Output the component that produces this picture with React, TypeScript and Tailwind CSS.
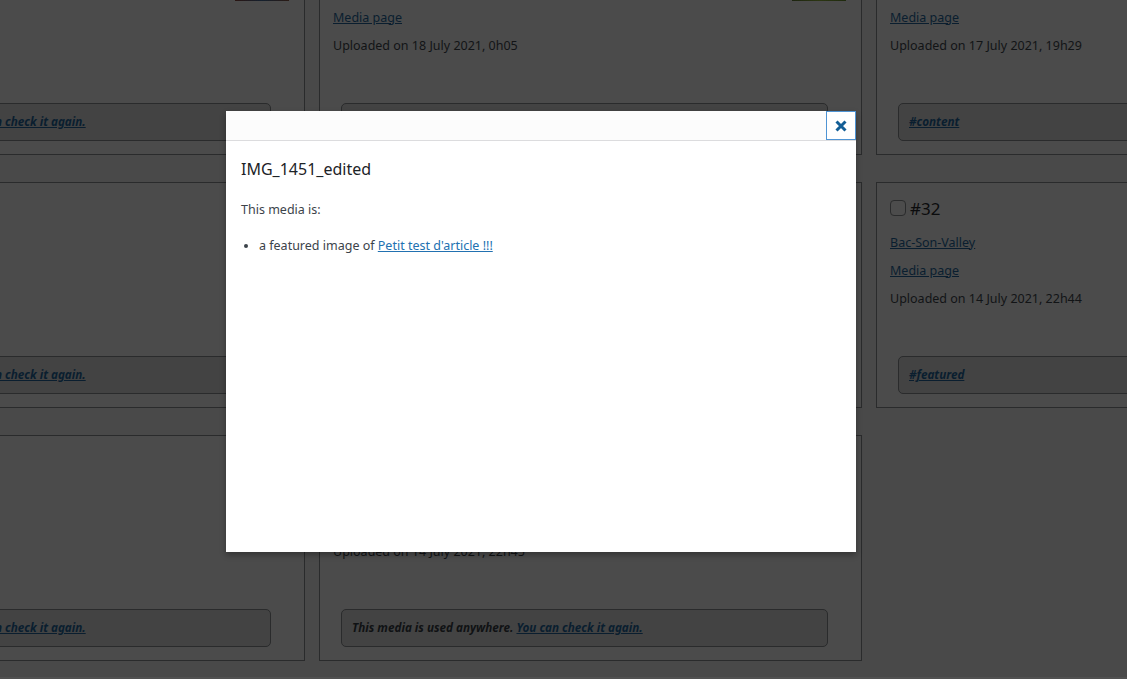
import React from "react";

type CardData = {
  id: string;
  title: string;
  uploaded: string;
  notice: React.ReactNode;
  thumb: string;
} | null;

const usedNotice = (
  <span>
    This media is used anywhere.{" "}
    <span className="underline text-[#0a1e2f]">You can check it again.</span>
  </span>
);

const cards: CardData[] = [
  { id: "#36", title: "IMG_1460", uploaded: "Uploaded on 18 July 2021, 0h10", notice: usedNotice, thumb: "bg-[linear-gradient(90deg,#2a1512,#14202e,#2a1a14)]" },
  { id: "#35", title: "IMG_1459", uploaded: "Uploaded on 18 July 2021, 0h05", notice: usedNotice, thumb: "bg-[linear-gradient(90deg,#1d2410,#2c3612,#1f2a0e)]" },
  { id: "#34", title: "IMG_1451_edited", uploaded: "Uploaded on 17 July 2021, 19h29", notice: <span className="underline text-[#0a1e2f]">#content</span>, thumb: "bg-[#2a2a2a]" },
  { id: "#33", title: "IMG_1450", uploaded: "Uploaded on 15 July 2021, 10h12", notice: usedNotice, thumb: "bg-[#2a2a2a]" },
  { id: "#31", title: "IMG_1449", uploaded: "Uploaded on 14 July 2021, 22h50", notice: usedNotice, thumb: "bg-[#2a2a2a]" },
  { id: "#32", title: "Bac-Son-Valley", uploaded: "Uploaded on 14 July 2021, 22h44", notice: <span className="underline text-[#0a1e2f]">#featured</span>, thumb: "bg-[#2a2a2a]" },
  { id: "#30", title: "IMG_1448", uploaded: "Uploaded on 14 July 2021, 22h46", notice: usedNotice, thumb: "bg-[#2a2a2a]" },
  { id: "#29", title: "IMG_1447", uploaded: "Uploaded on 14 July 2021, 22h45", notice: usedNotice, thumb: "bg-[#2a2a2a]" },
  null,
];

function Card({ c }: { c: NonNullable<CardData> }) {
  return (
    <div className="relative h-[226px] border border-[#2a2b2c] bg-[#4b4b4b] pl-[13px] pt-[14px]">
      <div className={`absolute right-[15px] top-[17px] h-[54px] w-[54px] ${c.thumb}`} />
      <div className="flex h-[22px] items-center gap-[4px]">
        <span className="block h-[16px] w-[16px] rounded-[4px] border border-[#2a2b2c] bg-[#4c4c4c]" />
        <span className="text-[17px] leading-none text-[#0b0c0d]">{c.id}</span>
      </div>
      <div className="mt-[15px] flex h-[18px] items-center">
        <span className="underline text-[#0a1e2f]">{c.title}</span>
      </div>
      <div className="mt-[10px] flex h-[18px] items-center">
        <span className="underline text-[#0a1e2f]">Media page</span>
      </div>
      <div className="mt-[10px] flex h-[18px] items-center text-[#121416]">{c.uploaded}</div>
      <div className="ml-[8px] mr-[33px] mt-[48px] flex h-[38px] items-center rounded-[5px] border border-[#2a2b2c] bg-[#434343] pl-[10px] text-[11.7px] font-bold italic text-[#101214]">
        {c.notice}
      </div>
    </div>
  );
}

export default function App() {
  return (
    <div
      className="relative h-[679px] w-[1127px] overflow-hidden bg-[#494949] text-[12.5px]"
      style={{ fontFamily: '"Noto Sans", "Open Sans", sans-serif' }}
    >
      <div className="-ml-[238px] -mt-[71px] grid w-[1657px] grid-cols-[543px_543px_543px] gap-x-[14px] gap-y-[27px]">
        {cards.map((c, i) => (c ? <Card key={i} c={c} /> : <div key={i} />))}
      </div>
      <div className="absolute bottom-0 left-0 h-[2px] w-full bg-[#515151]" />

      {/* Modal */}
      <div className="absolute left-[226px] top-[111px] flex h-[441px] w-[630px] flex-col bg-white shadow-[0_3px_6px_rgba(0,0,0,0.3)]">
        <div className="flex h-[30px] shrink-0 items-stretch justify-end border-b border-[#dcdcde] bg-[#fcfcfc]">
          <button className="flex w-[30px] items-center justify-center border border-[#4f94d4] bg-white">
            <svg width="14" height="14" viewBox="0 0 14 14">
              <path d="M2.5 2.5 L11.5 11.5 M11.5 2.5 L2.5 11.5" stroke="#135e96" strokeWidth="3" strokeLinecap="butt" />
            </svg>
          </button>
        </div>
        <div className="px-[15px] pt-[17px] text-[#3c434a]">
          <h1 className="text-[16px] leading-[22px] text-[#1d2327]">IMG_1451_edited</h1>
          <p className="mt-[21px] text-[12.5px] leading-[18px]">This media is:</p>
          <ul className="mt-[18px] list-disc pl-[18px] text-[12.5px] leading-[18px]">
            <li>
              a featured image of <span className="text-[#2271b1] underline">Petit test d'article !!!</span>
            </li>
          </ul>
        </div>
      </div>
    </div>
  );
}
